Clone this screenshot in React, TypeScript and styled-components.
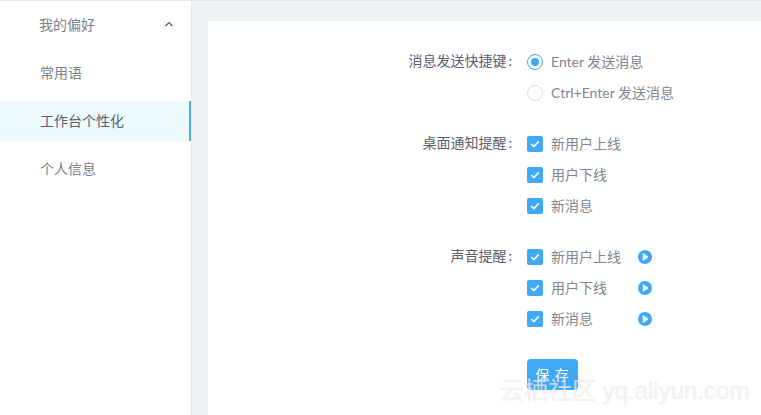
import React from "react";
import styled, { createGlobalStyle } from "styled-components";

const Global = createGlobalStyle`
  html, body { margin: 0; padding: 0; background: #fff; }
  body { width: 761px; height: 415px; overflow: hidden; font-family: "Lato", "Noto Sans CJK SC", sans-serif; font-size: 14px; }
`;

const Page = styled.div`
  position: relative;
  display: flex;
  width: 761px;
  height: 415px;
  overflow: hidden;
  box-sizing: border-box;
  border-top: 1px solid #e4e6e8;
`;

const Sidebar = styled.nav`
  flex: 0 0 192px;
  box-sizing: border-box;
  border-right: 1px solid #e6e9ec;
  background: #fff;
  padding-top: 4px;
  display: flex;
  flex-direction: column;
  gap: 8px;
`;

const MenuItem = styled.div<{ $active?: boolean; $head?: boolean }>`
  height: 40px;
  box-sizing: border-box;
  display: flex;
  align-items: center;
  justify-content: space-between;
  padding: 0 17px 2px ${(p) => (p.$head ? "39px" : "40px")};
  color: ${(p) => (p.$active ? "#5a6070" : "#7d818b")};
  background: ${(p) => (p.$active ? "#edfafd" : "transparent")};
  border-right: ${(p) => (p.$active ? "2px solid #5badd6" : "none")};
`;

const Main = styled.main`
  flex: 1;
  background: #eff2f5;
  padding: 20px 0 0 16px;
  display: flex;
`;

const Panel = styled.section`
  flex: 1;
  background: #fff;
  padding: 25px 0 0 0;
`;

const Group = styled.div`
  display: grid;
  grid-template-columns: 304px 1fr;
  column-gap: 15px;
  margin-bottom: 20px;
`;

const Label = styled.div`
  text-align: right;
  height: 31px;
  line-height: 29px;
  color: #5a6070;
`;

const Colon = styled.span`
  margin-left: 2px;
`;

const Options = styled.div`
  display: flex;
  flex-direction: column;
`;

const Option = styled.div`
  display: flex;
  align-items: center;
  height: 31px;
  color: #83868f;
`;

const OptionText = styled.span<{ $fixed?: boolean }>`
  margin-left: 8px;
  padding-bottom: 2px;
  ${(p) => (p.$fixed ? "width: 87px;" : "")}
`;

const Radio = styled.span<{ $on?: boolean }>`
  width: 16px;
  height: 16px;
  box-sizing: border-box;
  border-radius: 50%;
  border: 1px solid ${(p) => (p.$on ? "#3fa9f5" : "#dddee1")};
  display: flex;
  align-items: center;
  justify-content: center;
  &::after {
    content: "";
    width: 8px;
    height: 8px;
    border-radius: 50%;
    background: ${(p) => (p.$on ? "#3fa9f5" : "transparent")};
  }
`;

const CheckBox = styled.span`
  width: 16px;
  height: 16px;
  border-radius: 2px;
  background: #3fa9f5;
  display: flex;
  align-items: center;
  justify-content: center;
`;

const SaveButton = styled.button`
  display: block;
  margin: 25px 0 0 319px;
  width: 51px;
  height: 31px;
  border: none;
  border-radius: 4px;
  background: #3fa9f5;
  color: #fff;
  font-family: inherit;
  font-size: 14px;
  letter-spacing: 1px;
  padding: 0 0 2px;
`;

const Watermark = styled.div`
  position: absolute;
  left: 500px;
  top: 375px;
  color: rgba(255, 255, 255, 0.6);
  text-shadow: 0 0 1px rgba(170, 170, 170, 0.4);
  font-family: "Liberation Sans", "Noto Sans CJK SC", sans-serif;
  font-size: 24px;
  line-height: 30px;
  white-space: nowrap;
`;

const Check = () => (
  <svg width="10" height="8" viewBox="0 0 10 8" fill="none">
    <path d="M1.2 4l2.6 2.6L8.8 1.4" stroke="#fff" strokeWidth="1.7" />
  </svg>
);

const Play = () => (
  <svg width="14" height="14" viewBox="0 0 14 14">
    <circle cx="7" cy="7" r="7" fill="#3fa9f5" />
    <path d="M5.2 3.6L10 7l-4.8 3.4z" fill="#fff" stroke="#fff" strokeWidth="0.8" strokeLinejoin="round" />
  </svg>
);

const Chevron = () => (
  <svg width="10" height="6" viewBox="0 0 10 6" fill="none">
    <path d="M1.5 5L5 1.5 8.5 5" stroke="#55595f" strokeWidth="1.2" />
  </svg>
);

const CheckGroup = ({ title, sound }: { title: string; sound?: boolean }) => (
  <Group>
    <div>
      <Label>
        {title}
        <Colon>:</Colon>
      </Label>
    </div>
    <Options>
      {["新用户上线", "用户下线", "新消息"].map((t) => (
        <Option key={t}>
          <CheckBox>
            <Check />
          </CheckBox>
          <OptionText $fixed={sound}>{t}</OptionText>
          {sound && <Play />}
        </Option>
      ))}
    </Options>
  </Group>
);

export default function App() {
  return (
    <Page>
      <Global />
      <Sidebar>
        <MenuItem $head>
          <span>我的偏好</span>
          <Chevron />
        </MenuItem>
        <MenuItem>常用语</MenuItem>
        <MenuItem $active>工作台个性化</MenuItem>
        <MenuItem>个人信息</MenuItem>
      </Sidebar>
      <Main>
        <Panel>
          <Group>
            <div>
              <Label>
                消息发送快捷键
                <Colon>:</Colon>
              </Label>
            </div>
            <Options>
              <Option>
                <Radio $on />
                <OptionText>Enter 发送消息</OptionText>
              </Option>
              <Option>
                <Radio />
                <OptionText>Ctrl+Enter 发送消息</OptionText>
              </Option>
            </Options>
          </Group>
          <CheckGroup title="桌面通知提醒" />
          <CheckGroup title="声音提醒" sound />
          <SaveButton>保 存</SaveButton>
        </Panel>
      </Main>
      <Watermark>云栖社区 yq.aliyun.com</Watermark>
    </Page>
  );
}
